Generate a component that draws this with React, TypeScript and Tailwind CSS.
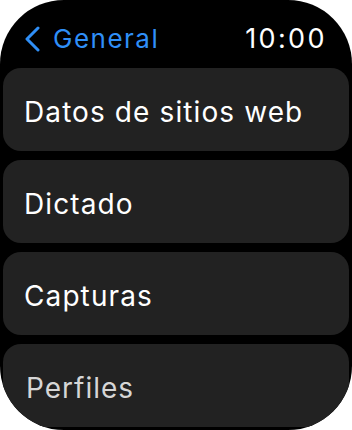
const items = [
  { label: "Datos de sitios web" },
  { label: "Dictado" },
  { label: "Capturas" },
  { label: "Perfiles", dim: true },
]

function Chevron() {
  return (
    <svg width="20" height="26" viewBox="0 0 20 26" fill="none">
      <path
        d="M16 2 L5 13 L16 24"
        stroke="#2f8ff7"
        strokeWidth="3"
        strokeLinecap="round"
        strokeLinejoin="round"
      />
    </svg>
  )
}

export default function App() {
  return (
    <div className="w-[352px] h-[430px] bg-white font-['Inter','Liberation_Sans',sans-serif]">
      <div className="w-full h-full bg-black rounded-[64px] overflow-hidden flex flex-col">
        <header className="h-[68px] flex items-center justify-between pl-[22px] pr-[25px] pt-[9px]">
          <div className="flex items-center gap-[11px] text-[#2f8ff7]">
            <Chevron />
            <span className="text-[26px] leading-none tracking-[1.5px]">General</span>
          </div>
          <span className="text-white text-[27px] leading-none tracking-[2.4px]">10:00</span>
        </header>
        <div className="flex flex-col gap-[9px] px-[3px]">
          {items.map((item) => (
            <div
              key={item.label}
              className="h-[83px] shrink-0 rounded-[18px] bg-[#222222] flex items-center"
            >
              <span
                className={
                  item.dim
                    ? "pl-[23px] pt-[4px] text-[28px] leading-none tracking-[1px] text-[#d6d6d6]"
                    : "pl-[21px] pt-[4px] text-[28px] leading-none tracking-[1.1px] text-white"
                }
              >
                {item.label}
              </span>
            </div>
          ))}
        </div>
      </div>
    </div>
  )
}
